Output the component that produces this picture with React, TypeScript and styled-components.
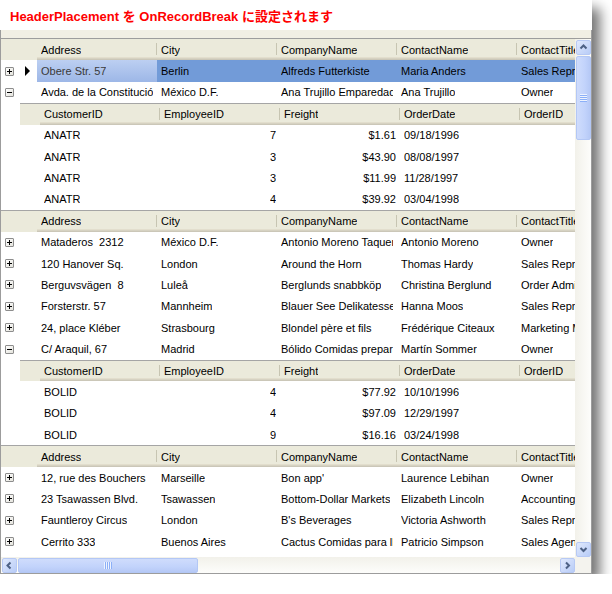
import React from "react";
import styled, { createGlobalStyle } from "styled-components";

const GlobalStyle = createGlobalStyle`
  html, body {
    margin: 0;
    padding: 0;
    background: #fff;
  }
  body {
    font-family: "Liberation Sans", Arial, sans-serif;
    font-size: 11px;
    color: #000;
  }
`;

const ROW_H = "21.4px";

const Window = styled.div`
  width: 592px;
  height: 574px;
  background: #fff;
  display: flex;
  flex-direction: column;
  box-shadow: 8px 8px 12px rgba(0, 0, 0, 0.55);
`;

const Title = styled.h1`
  margin: 0;
  height: 30px;
  flex: 0 0 30px;
  padding-left: 10px;
  display: flex;
  align-items: center;
  font: bold 13px "Liberation Sans", "Noto Sans CJK JP", sans-serif;
  color: #ff0000;
`;

const Grid = styled.div`
  flex: 1;
  min-height: 0;
  display: flex;
  flex-direction: column;
  border: 1px solid #9c9c9c;
  border-top: none;
`;

const GroupStrip = styled.div`
  flex: 0 0 8px;
  background: #f1efe4;
  border-bottom: 1px solid #9d9d9d;
`;

const Body = styled.div`
  flex: 1;
  min-height: 0;
  display: flex;
`;

const Viewport = styled.div`
  flex: 1;
  min-width: 0;
  overflow: hidden;
`;

const HeaderBand = styled.div<{ $indent: number; $top: boolean }>`
  display: flex;
  height: ${ROW_H};
  box-sizing: border-box;
  margin-left: ${(p) => p.$indent}px;
  background: #ebeadb;
  border-top: ${(p) => (p.$top ? "1px solid #a5a5a5" : "none")};
`;

const Lead = styled.div<{ $w: number }>`
  flex: 0 0 ${(p) => p.$w}px;
`;

const HeaderCell = styled.div`
  flex: 0 0 120px;
  min-width: 0;
  overflow: hidden;
  box-sizing: border-box;
  position: relative;
  padding: 0 4px;
  display: flex;
  align-items: center;
  box-shadow: inset 0 -1px #cbc7b8, inset 0 -2px #d6d2c2, inset 0 -3px #e2decd;
  &::after {
    content: "";
    position: absolute;
    right: 0;
    top: 4px;
    bottom: 5px;
    width: 1px;
    background: #c7c5b2;
  }
`;

const Clip = styled.span`
  display: block;
  min-width: 0;
  overflow: hidden;
  white-space: pre;
`;

const DataRow = styled.div<{ $indent: number }>`
  display: flex;
  height: ${ROW_H};
  margin-left: ${(p) => p.$indent}px;
`;

const ExpanderCell = styled.div`
  flex: 0 0 20px;
  box-sizing: border-box;
  padding-left: 4px;
  display: flex;
  align-items: center;
`;

const ExpandBox = styled.span<{ $open: boolean }>`
  position: relative;
  width: 9px;
  height: 9px;
  box-sizing: border-box;
  border: 1px solid #8d8d8d;
  border-radius: 1px;
  background: linear-gradient(135deg, #ffffff, #e4e3dc);
  &::before {
    content: "";
    position: absolute;
    left: 1px;
    top: 3px;
    width: 5px;
    height: 1px;
    background: #000;
  }
  &::after {
    content: "";
    display: ${(p) => (p.$open ? "none" : "block")};
    position: absolute;
    left: 3px;
    top: 1px;
    width: 1px;
    height: 5px;
    background: #000;
  }
`;

const SelectorCell = styled.div<{ $w: number }>`
  flex: 0 0 ${(p) => p.$w}px;
  box-sizing: border-box;
  padding-left: 4px;
  display: flex;
  align-items: center;
`;

const RowArrow = styled.span`
  width: 0;
  height: 0;
  border-left: 5px solid #000;
  border-top: 5px solid transparent;
  border-bottom: 5px solid transparent;
`;

const Cell = styled.div<{ $right?: boolean; $sel?: boolean; $active?: boolean }>`
  flex: 0 0 120px;
  min-width: 0;
  overflow: hidden;
  box-sizing: border-box;
  padding: 0 4px;
  display: flex;
  align-items: center;
  justify-content: ${(p) => (p.$right ? "flex-end" : "flex-start")};
  color: ${(p) => (p.$active ? "#3a3a3a" : "#000")};
  background: ${(p) =>
    p.$active
      ? "linear-gradient(180deg, #bccff2, #9db7e7)"
      : p.$sel
      ? "#729bd8"
      : "transparent"};
`;

const SelFill = styled.div<{ $sel: boolean }>`
  flex: 1 0 auto;
  background: ${(p) => (p.$sel ? "#729bd8" : "transparent")};
`;

const VScroll = styled.div`
  flex: 0 0 16px;
  display: flex;
  flex-direction: column;
  align-items: center;
  padding: 1px 0 0;
  background: linear-gradient(90deg, #f2f1ea, #fdfdfb);
`;

const ScrollBtn = styled.div`
  flex: 0 0 auto;
  width: 15px;
  height: 15px;
  box-sizing: border-box;
  border: 1px solid #b7c9f4;
  border-radius: 2px;
  background: linear-gradient(135deg, #e0e9fd, #b8ccf7);
  display: flex;
  align-items: center;
  justify-content: center;
`;

const Track = styled.div`
  flex: 1;
`;

const VThumb = styled.div`
  width: 15px;
  height: 84px;
  margin-top: 1px;
  box-sizing: border-box;
  border: 1px solid #b3c7f5;
  border-radius: 2px;
  background: linear-gradient(90deg, #cfdcfc, #c2d3fb 60%, #b6c9f6);
  display: flex;
  align-items: center;
  justify-content: center;
`;

const HScrollRow = styled.div`
  flex: 0 0 16px;
  display: flex;
`;

const HScroll = styled.div`
  flex: 1;
  display: flex;
  align-items: center;
  padding-left: 1px;
  background: linear-gradient(180deg, #f2f1ea, #fdfdfb);
`;

const HThumb = styled.div`
  width: 180px;
  height: 15px;
  margin-left: 1px;
  box-sizing: border-box;
  border: 1px solid #b3c7f5;
  border-radius: 2px;
  background: linear-gradient(180deg, #cfdcfc, #c2d3fb 60%, #b6c9f6);
  display: flex;
  align-items: center;
  justify-content: center;
`;

const Corner = styled.div`
  flex: 0 0 16px;
  background: #f4f3ee;
`;

const Chevron = ({ dir }: { dir: "up" | "down" | "left" | "right" }) => {
  const d = {
    up: "M2.5 6.5 L5.5 3.5 L8.5 6.5",
    down: "M2.5 4 L5.5 7 L8.5 4",
    left: "M6.5 2.5 L3.5 5.5 L6.5 8.5",
    right: "M4 2.5 L7 5.5 L4 8.5",
  }[dir];
  return (
    <svg width="11" height="11" viewBox="0 0 11 11">
      <path d={d} fill="none" stroke="#4d6185" strokeWidth="2" />
    </svg>
  );
};

const Grip = ({ vertical }: { vertical: boolean }) => (
  <svg width={vertical ? 7 : 8} height={vertical ? 8 : 7}>
    {[0, 2, 4, 6].map((i) =>
      vertical ? (
        <g key={i}>
          <rect x="0" y={i} width="7" height="1" fill="#eef3fe" />
          <rect x="0" y={i + 1} width="7" height="1" fill="#8cb0f8" />
        </g>
      ) : (
        <g key={i}>
          <rect x={i} y="0" width="1" height="7" fill="#eef3fe" />
          <rect x={i + 1} y="0" width="1" height="7" fill="#8cb0f8" />
        </g>
      )
    )}
  </svg>
);

const parentCols = ["Address", "City", "CompanyName", "ContactName", "ContactTitle"];
const childCols = ["CustomerID", "EmployeeID", "Freight", "OrderDate", "OrderID"];

type Customer = string[];
type Order = [string, string, string, string];

const ParentHeader = ({ top }: { top: boolean }) => (
  <HeaderBand $indent={0} $top={top}>
    <Lead $w={36} />
    {parentCols.map((c) => (
      <HeaderCell key={c}>
        <Clip>{c}</Clip>
      </HeaderCell>
    ))}
  </HeaderBand>
);

const ChildHeader = () => (
  <HeaderBand $indent={19} $top>
    <Lead $w={20} />
    {childCols.map((c) => (
      <HeaderCell key={c}>
        <Clip>{c}</Clip>
      </HeaderCell>
    ))}
  </HeaderBand>
);

const CustomerRow = ({
  data,
  open,
  selected,
}: {
  data: Customer;
  open?: boolean;
  selected?: boolean;
}) => (
  <DataRow $indent={0}>
    <ExpanderCell>
      <ExpandBox $open={!!open} />
    </ExpanderCell>
    <SelectorCell $w={16}>{selected && <RowArrow />}</SelectorCell>
    {data.map((v, i) => (
      <Cell key={i} $sel={selected} $active={selected && i === 0}>
        <Clip>{v}</Clip>
      </Cell>
    ))}
    <SelFill $sel={!!selected} />
  </DataRow>
);

const OrderRow = ({ data }: { data: Order }) => (
  <DataRow $indent={19}>
    <Lead $w={20} />
    <Cell>
      <Clip>{data[0]}</Clip>
    </Cell>
    <Cell $right>
      <Clip>{data[1]}</Clip>
    </Cell>
    <Cell $right>
      <Clip>{data[2]}</Clip>
    </Cell>
    <Cell>
      <Clip>{data[3]}</Clip>
    </Cell>
    <Cell />
  </DataRow>
);

const anatr: Order[] = [
  ["ANATR", "7", "$1.61", "09/18/1996"],
  ["ANATR", "3", "$43.90", "08/08/1997"],
  ["ANATR", "3", "$11.99", "11/28/1997"],
  ["ANATR", "4", "$39.92", "03/04/1998"],
];

const bolid: Order[] = [
  ["BOLID", "4", "$77.92", "10/10/1996"],
  ["BOLID", "4", "$97.09", "12/29/1997"],
  ["BOLID", "9", "$16.16", "03/24/1998"],
];

const band2: Customer[] = [
  ["Mataderos  2312", "México D.F.", "Antonio Moreno Taquería", "Antonio Moreno", "Owner"],
  ["120 Hanover Sq.", "London", "Around the Horn", "Thomas Hardy", "Sales Representative"],
  ["Berguvsvägen  8", "Luleå", "Berglunds snabbköp", "Christina Berglund", "Order Administrator"],
  ["Forsterstr. 57", "Mannheim", "Blauer See Delikatessen", "Hanna Moos", "Sales Representative"],
  ["24, place Kléber", "Strasbourg", "Blondel père et fils", "Frédérique Citeaux", "Marketing Manager"],
];

const band3: Customer[] = [
  ["12, rue des Bouchers", "Marseille", "Bon app'", "Laurence Lebihan", "Owner"],
  ["23 Tsawassen Blvd.", "Tsawassen", "Bottom-Dollar Markets", "Elizabeth Lincoln", "Accounting Manager"],
  ["Fauntleroy Circus", "London", "B's Beverages", "Victoria Ashworth", "Sales Representative"],
  ["Cerrito 333", "Buenos Aires", "Cactus Comidas para llevar", "Patricio Simpson", "Sales Agent"],
];

export default function App() {
  return (
    <>
      <GlobalStyle />
      <Window>
        <Title>HeaderPlacement を OnRecordBreak に設定されます</Title>
        <Grid>
          <GroupStrip />
          <Body>
            <Viewport>
              <ParentHeader top={false} />
              <CustomerRow
                selected
                data={["Obere Str. 57", "Berlin", "Alfreds Futterkiste", "Maria Anders", "Sales Representative"]}
              />
              <CustomerRow
                open
                data={[
                  "Avda. de la Constitución 2222",
                  "México D.F.",
                  "Ana Trujillo Emparedados y helados",
                  "Ana Trujillo",
                  "Owner",
                ]}
              />
              <ChildHeader />
              {anatr.map((o, i) => (
                <OrderRow key={i} data={o} />
              ))}
              <ParentHeader top />
              {band2.map((c, i) => (
                <CustomerRow key={i} data={c} />
              ))}
              <CustomerRow
                open
                data={["C/ Araquil, 67", "Madrid", "Bólido Comidas preparadas", "Martín Sommer", "Owner"]}
              />
              <ChildHeader />
              {bolid.map((o, i) => (
                <OrderRow key={i} data={o} />
              ))}
              <ParentHeader top />
              {band3.map((c, i) => (
                <CustomerRow key={i} data={c} />
              ))}
            </Viewport>
            <VScroll>
              <ScrollBtn>
                <Chevron dir="up" />
              </ScrollBtn>
              <VThumb>
                <Grip vertical />
              </VThumb>
              <Track />
              <ScrollBtn>
                <Chevron dir="down" />
              </ScrollBtn>
            </VScroll>
          </Body>
          <HScrollRow>
            <HScroll>
              <ScrollBtn>
                <Chevron dir="left" />
              </ScrollBtn>
              <HThumb>
                <Grip vertical={false} />
              </HThumb>
              <Track />
              <ScrollBtn>
                <Chevron dir="right" />
              </ScrollBtn>
            </HScroll>
            <Corner />
          </HScrollRow>
        </Grid>
      </Window>
    </>
  );
}
